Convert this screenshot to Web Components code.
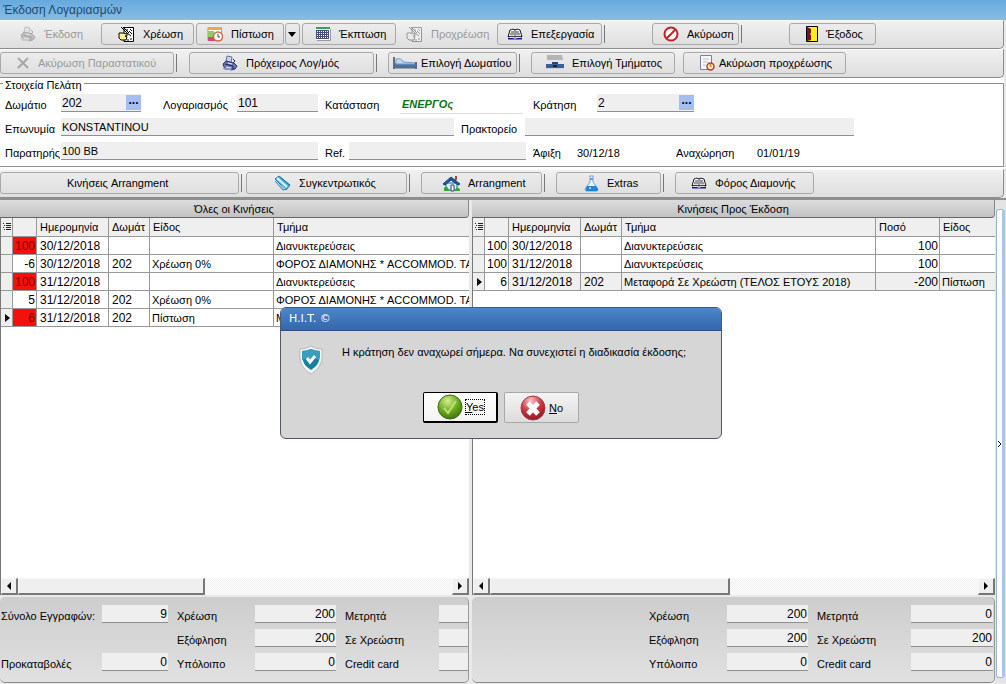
<!DOCTYPE html>
<html lang="el">
<head>
<meta charset="utf-8">
<title>Έκδοση Λογαριασμών</title>
<style>
  html, body { margin: 0; height: 100%; }
  body { font: 11px/14px "Liberation Sans", Arial, sans-serif; color: #000; background: #e9e9e9; overflow: hidden; }
</style>
</head>
<body>
<billing-window></billing-window>

<script>
const ICONS = {
  printer: [16, 16, '<path d="M5 1l5 1-1 6-5-2z" fill="#c9d2f0" stroke="#66709c"/><path d="M1 9l3-3 8 2 3 3-2 3-4 1-7-3z" fill="#6d78b0" stroke="#2c3564"/><path d="M0 13l6-1 4 3H3z" fill="#8a94c4"/><path d="M3 9l8 2v3M11 4l2 2-2 2" fill="none" stroke="#1c2454"/><path d="M4 12l5 1M6 8l4 1" stroke="#e6eaff"/>'],
  charge: [17, 17, '<path d="M6 1.500h9.500v14H6z" fill="#fff" stroke="#000"/><path d="M8 4h2M12 3l2 2M9 7l4 3M12 13h2M9 14h2M11 5l3 3" stroke="#000"/><path d="M3 1l7 7M5 1l6 6" stroke="#000"/><path d="M1 7h4l4 1v2H7l2 1-1 3H3l-2-2z" fill="#fff48a" stroke="#000"/>'],
  credit: [16, 16, '<path d="M1 1.500h13.500v13H1z" fill="#fff" stroke="#d9922b"/><path d="M1 1h14v3H1z" fill="#f0a93c"/><path d="M1 5h6v6H1z" fill="#8bcb6a"/><path d="M1 11h8v4H1z" fill="#d84a72"/><circle cx="11" cy="10.500" r="4.500" fill="#fff" stroke="#d3684a" stroke-width="1.500"/><path d="M11 8v3h2" fill="none" stroke="#446"/>'],
  sheet: [16, 16, '<path d="M1 2h14v12H1z" fill="#fff"/><path d="M1 1h14v2H1z" fill="#31a060"/><path d="M1 4.500h13M1 6.500h13M1 8.500h13M1 10.500h13M1 12.500h13M1.500 4v9M3.500 4v9M5.500 4v9M7.500 4v9M9.500 4v9M11.500 4v9M13.500 4v9" stroke="#444c78"/><path d="M2 14.500h13.500V3" fill="none" stroke="#99a"/>'],
  book: [16, 14, '<path d="M1 10l2-7c2-1 4-1 5 0 1-1 3-1 5 0l2 7c-3-1-5-1-7 0-2-1-4-1-7 0z" fill="#fff" stroke="#111"/><path d="M8 3v7M4 5h3M3 7h4M9 5h3M9 7h4" stroke="#334"/><path d="M1 11h5l2 1 2-1h5v1.500H1z" fill="#141a9c"/>'],
  forbid: [16, 16, '<circle cx="8" cy="8" r="6.500" fill="#fff" stroke="#c41e28" stroke-width="2"/><path d="M3.500 12.500l9-9" stroke="#c41e28" stroke-width="2"/>'],
  door: [12, 16, '<path d="M.5.5h11v15H.5z" fill="#ffef18" stroke="#000"/><path d="M1 1l4 2v11l-4 1z" fill="#7c1020"/><path d="M4 8h1" stroke="#fff"/>'],
  cross: [14, 14, '<path d="M2 2l10 10M12 2L2 12" stroke="#333" stroke-width="2"/>'],
  bed: [24, 14, '<path d="M1 1v12" stroke="#6b6b73" stroke-width="2"/><path d="M2 7h20v4H2z" fill="#4775ae"/><path d="M3 3c4-1 6 0 7 3l12 1v1H3z" fill="#bcd8f2" stroke="#7898c0"/><path d="M1 11.500h22M23 6v7" stroke="#596a84" stroke-width="2"/>'],
  desk: [18, 16, '<path d="M1 0h15l1 5H1z" fill="#b4b4b4"/><path d="M1 5h16v3H1z" fill="#e6e6e6"/><path d="M6 7h6v3H6z" fill="#26447a"/><path d="M0 9h18v4H0z" fill="#3a6098"/><path d="M0 13.500h18" stroke="#c8d2e4"/><path d="M7 11h4" stroke="#122" stroke-width="2"/>'],
  pagecancel: [16, 16, '<path d="M1.500.5h11v14h-11z" fill="#f5f8fb" stroke="#788292"/><path d="M4 4h6M4 7h5M4 10h3" stroke="#b6c0cc"/><circle cx="11.500" cy="11.500" r="3.500" fill="#fff4c8" stroke="#c4353a" stroke-width="1.500"/><path d="M11.500 9v3" stroke="#e58a22" stroke-width="2"/>'],
  pencils: [17, 16, '<path d="M1 4l4-3 11 9-4 5z" fill="#54b3e0" stroke="#2a6f9d"/><path d="M3 3l10 9" stroke="#d8f3ff" stroke-width="2"/><path d="M6 2l9 8" stroke="#2477ac"/><path d="M1 6l8 9 3-1" fill="#9fd4ee" stroke="#3b7da4"/>'],
  house: [17, 17, '<path d="M3 8h11v7H3z" fill="#d9ecfa" stroke="#2c67a0"/><path d="M0 9l8-7 9 7-2 1-7-5-6 5z" fill="#1a5a9e" stroke="#134274"/><path d="M12 1h2v4h-2z" fill="#9b5030"/><path d="M8 10h3v6H8z" fill="#fff" stroke="#247"/><path d="M1 13c2-3 5 0 5 3H1zM12 15c1-3 4-3 5 0v1h-5z" fill="#35a632"/>'],
  flask: [15, 17, '<path d="M5.500 1h4M6 1v6l-5 7c0 2 1 2 3 2h8c2 0 2-1 2-2L9 7V1" fill="#eaf5ff" stroke="#7ba3ce"/><path d="M3 11h9l2 3c0 2-1 2-2 2H4c-2 0-3 0-2-3z" fill="#2283dc"/><circle cx="6" cy="13" r="1" fill="#b8e5ff"/><path d="M6 3h3v2H6z" fill="#679cd2"/>'],
  shield: [26, 30, '<path d="M13 1c3 2 7 3 11 3 1 12-1 19-11 25C3 23 1 16 2 4c4 0 8-1 11-3z" fill="#f4f7f8" stroke="#b1b9bd"/><path d="M13 4c3 1 6 2 9 2 0 9-1 14-9 19C5 20 4 15 4 6c3 0 6-1 9-2z" fill="#12809f"/><path d="M13 4c3 1 6 2 9 2 0 4 0 6-1 9-5-2-11-2-17 0V6c3 0 6-1 9-2z" fill="#3a9dbd"/><path d="M9 13l3 4 5-6" fill="none" stroke="#fff" stroke-width="3"/>'],
  ok: [26, 26, '<defs><radialGradient id="g" cx=".4" cy=".25" r=".9"><stop offset="0" stop-color="#d4ee8e"/><stop offset=".5" stop-color="#6aa81e"/><stop offset="1" stop-color="#2d6206"/></radialGradient></defs><circle cx="13" cy="13" r="12" fill="url(#g)" stroke="#3c6c10"/><path d="M7 14l4 5 8-12" fill="none" stroke="#bfe070" stroke-width="2"/>'],
  no: [26, 26, '<defs><radialGradient id="r" cx=".4" cy=".2" r=".9"><stop offset="0" stop-color="#f7c6c8"/><stop offset=".5" stop-color="#cc3640"/><stop offset="1" stop-color="#86131c"/></radialGradient></defs><circle cx="13" cy="13" r="12" fill="url(#r)" stroke="#a04048"/><path d="M8 8l10 11M18 8L8 19" stroke="#fff" stroke-width="5"/>']
};

class UiElement extends HTMLElement {
  connectedCallback() {
    if (this.shadowRoot) return;
    this.attachShadow({ mode: 'open' }).innerHTML =
      `<style>*{box-sizing:border-box}${this.styles()}</style>${this.markup()}`;
  }
  attr(name, fallback = '') { return this.getAttribute(name) ?? fallback; }
}

customElements.define('ui-icon', class extends UiElement {
  styles() { return ':host{display:block;flex:none} svg{display:block}'; }
  markup() {
    const [w, h, body] = ICONS[this.attr('name')];
    return `<svg width="${w}" height="${h}" viewBox="0 0 ${w} ${h}" aria-hidden="true">${body}</svg>`;
  }
});

customElements.define('title-bar', class extends UiElement {
  styles() { return `:host{display:flex;align-items:center;flex:none;height:20px;padding-left:3px;
    background:linear-gradient(#67aade,#86bde2);color:#1d4a70;font-size:12px}
    h1{margin:0;font:inherit}`; }
  markup() { return '<h1><slot></slot></h1>'; }
});

customElements.define('tool-bar', class extends UiElement {
  styles() { return `:host{display:flex;flex:none;height:29px;margin-right:2px;padding-top:2px;align-items:flex-start;
    background:linear-gradient(#f1f1f1,#dedede);border:1px solid #8c8c8c;border-width:0 1px 1px 0;
    border-top:1px solid #fbfbfb;border-bottom-right-radius:5px}`; }
  markup() { return '<slot></slot>'; }
});

customElements.define('tool-button', class extends UiElement {
  styles() { return `:host{display:block;flex:none;width:${this.attr('width')}px;margin-left:${this.attr('gap', '2')}px}
    button{display:flex;align-items:center;gap:8px;width:100%;height:22px;padding:0 0 0 ${this.attr('pad', '0')}px;
      font:inherit;color:#000;white-space:nowrap;border:1px solid #a9a9a9;border-radius:3px;
      background:linear-gradient(#ececec,#dfdfdf)}
    :host([tight]) button{gap:4px}
    :host([flat]) button{border-color:transparent;background:none}
    :host([disabled]) button{color:#999}
    :host([disabled]) ui-icon{filter:grayscale(1);opacity:.35}
    i{border:4px solid transparent;border-top:5px solid #000;border-bottom:0}`; }
  markup() {
    const icon = this.attr('icon');
    const inner = this.hasAttribute('arrow') ? '<i></i>' : '<span><slot></slot></span>';
    return `<button type="button" ${this.hasAttribute('disabled') ? 'disabled' : ''} ${this.hasAttribute('arrow') ? 'aria-label="▼"' : ''}>
      ${icon ? `<ui-icon name="${icon}"></ui-icon>` : ''}${inner}</button>`;
  }
});

customElements.define('tool-sep', class extends UiElement {
  styles() { return ':host{display:block;flex:none;width:1px;height:18px;margin:2px 0 0 2px;background:#777}'; }
  markup() { return ''; }
});

customElements.define('form-field', class extends UiElement {
  styles() { return `:host{display:flex;flex:none}
    label{width:${this.attr('label-width')}px;padding:4px 0 0 ${this.attr('pad', '5')}px;flex:none;white-space:nowrap}
    .box{display:flex;width:${this.attr('width')}px;height:18px;background:#efefef;border-bottom:1px solid #8f8f8f}
    input{flex:1;min-width:0;width:0;padding:0 1px;border:0;background:none;font:inherit;color:#000;outline:0}
    :host([right]) input{text-align:right}
    :host([large]) input{font-size:12px}
    button{width:15px;height:15px;margin:1px 0 0;padding:0 0 5px;border:0;background:#a5bdf0;font:bold 12px/9px "Liberation Sans",sans-serif;color:#002}
    :host([plain]) .box{background:none;border-color:transparent}
    :host([plain]) input{padding-top:4px}
    :host([status]) .box{background:none;border-color:#ddd;height:20px}
    :host([status]) input{color:#0b7414;font-weight:bold;font-style:italic;padding-left:2px}`; }
  markup() {
    return `<label for="f">${this.attr('label')}</label><div class="box">
      <input id="f" value="${this.attr('value')}" readonly>
      ${this.hasAttribute('lookup') ? '<button type="button">...</button>' : ''}</div>`;
  }
});

customElements.define('client-details', class extends UiElement {
  styles() { return `:host{display:block;flex:none;margin-right:2px;background:#fff;padding:1px 0 2px}
    fieldset{margin:0;padding:7px 0 6px;border:1px solid #8f8f8f;border-left:0;min-width:0}
    legend{margin-left:3px;padding:0 2px;line-height:12px;height:8px}
    .row{display:flex;height:24px;align-items:flex-start}
    .row:last-child{height:18px}`; }
  markup() { return `<fieldset><legend>Στοιχεία Πελάτη</legend>
    <div class="row">
      <form-field large lookup label="Δωμάτιο" label-width="61" width="80" value="202"></form-field>
      <form-field large label="Λογαριασμός" label-width="96" pad="22" width="81" value="101"></form-field>
      <form-field status label="Κατάσταση" label-width="82" pad="7" width="123" value="ΕΝΕΡΓΟς"></form-field>
      <form-field large lookup label="Κράτηση" label-width="74" pad="10" width="97" value="2"></form-field>
    </div>
    <div class="row">
      <form-field label="Επωνυμία" label-width="61" width="393" value="KONSTANTINOU"></form-field>
      <form-field label="Πρακτορείο" label-width="71" pad="7" width="329"></form-field>
    </div>
    <div class="row">
      <form-field label="Παρατηρής" label-width="61" width="257" value="100 BB"></form-field>
      <form-field label="Ref." label-width="31" pad="7" width="177"></form-field>
      <form-field plain label="Άφιξη" label-width="50" pad="7" width="90" value="30/12/18"></form-field>
      <form-field plain label="Αναχώρηση" label-width="90" pad="10" width="90" value="01/01/19"></form-field>
    </div></fieldset>`; }
});

customElements.define('scroll-strip', class extends UiElement {
  styles() { return `:host{display:flex;height:17px;flex:none;background:repeating-conic-gradient(#f1f1f1 0 25%,#fdfdfd 0 50%) 0 0/2px 2px}
    button,.thumb{height:17px;flex:none;padding:0;border:1px solid #f7f7f7;border-right:2px solid #777;border-bottom:2px solid #777;background:#efefef}
    button{display:grid;place-items:center;width:17px}
    .thumb{width:${this.attr('thumb')}%} .track{flex:1}
    i{border:4px solid transparent}
    .l{border-right-color:#000;border-left:0}.r{border-left-color:#000;border-right:0}`; }
  markup() { return `<button type="button" aria-label="◂"><i class="l"></i></button><div class="thumb"></div><div class="track"></div>
    <button type="button" aria-label="▸"><i class="r"></i></button>`; }
});

const GRIDS = {
  all: {
    cols: [[24, '', 'num'], [72, 'Ημερομηνία', 'big'], [41, 'Δωμάτ', 'big'], [124, 'Είδος', ''], [0, 'Τμήμα', '']],
    rows: [
      ['100', '30/12/2018', '', '', 'Διανυκτερεύσεις'],
      ['-6', '30/12/2018', '202', 'Χρέωση 0%', 'ΦΟΡΟΣ ΔΙΑΜΟΝΗΣ * ACCOMMOD. TAX'],
      ['100', '31/12/2018', '', '', 'Διανυκτερεύσεις'],
      ['5', '31/12/2018', '202', 'Χρέωση 0%', 'ΦΟΡΟΣ ΔΙΑΜΟΝΗΣ * ACCOMMOD. TAX'],
      ['6', '31/12/2018', '202', 'Πίστωση', 'Μ']
    ],
    red: [0, 2, 4], current: 4
  },
  issue: {
    cols: [[24, '', 'num'], [72, 'Ημερομηνία', 'big'], [41, 'Δωμάτ', 'big'], [0, 'Τμήμα', ''], [64, 'Ποσό', 'num'], [55, 'Είδος', '']],
    rows: [
      ['100', '30/12/2018', '', 'Διανυκτερεύσεις', '100', ''],
      ['100', '31/12/2018', '', 'Διανυκτερεύσεις', '100', ''],
      ['6', '31/12/2018', '202', 'Μεταφορά Σε Χρεώστη (ΤΕΛΟΣ ΕΤΟΥΣ 2018)', '-200', 'Πίστωση']
    ],
    red: [], current: 2, shade: true
  }
};

customElements.define('data-grid', class extends UiElement {
  styles() { return `:host{display:block;flex:1;min-height:0;background:#fff;overflow:hidden}
    table{width:100%;table-layout:fixed;border-collapse:separate;border-spacing:0}
    td,th{height:18px;padding:0 0 0 2px;border:1px solid #999;border-width:0 1px 1px 0;font-weight:normal;text-align:left;
      white-space:nowrap;overflow:hidden;line-height:14px}
    th{height:19px;padding:0 0 0 3px;background:#efefef}
    td:last-child,th:last-child{border-right:0}
    td.num{padding:0 1px 0 0;text-align:right;font-size:12px}
    td.big{padding-left:3px;font-size:12px}
    .red{background:#f4100c;color:#7d0808}
    .mark{background:#efefef;padding:0}
    .shade td{background:#efefef} .shade td.n0{background:#fff}
    i{display:block;width:0;margin-left:4px;border:4px solid transparent;border-left:5px solid #000;border-right:0}
    svg{display:block;margin:auto}`; }
  markup() {
    const g = GRIDS[this.attr('source')];
    const col = g.cols.map(c => c[0] ? `<col style="width:${c[0]}px">` : '<col>').join('');
    const head = g.cols.map(c => `<th>${c[1]}</th>`).join('');
    const rows = g.rows.map((r, i) => `<tr class="${g.shade && i === g.current ? 'shade' : ''}">
      <td class="mark">${i === g.current ? '<i></i>' : ''}</td>` +
      r.map((t, j) => `<td class="${g.cols[j][2]} n${j} ${j === 0 && g.red.includes(i) ? 'red' : ''}">${t}</td>`).join('') + '</tr>').join('');
    return `<table><colgroup><col style="width:12px">${col}</colgroup><thead><tr>
      <th class="mark"><svg width="8" height="10" viewBox="0 0 8 10" aria-hidden="true"><path d="M0 1.500h1M3 1.500h5M1 3.500h1M3 3.500h5M0 5.500h1M3 5.500h5M1 7.500h1M3 7.500h5" stroke="#222"/></svg></th>${head}</tr></thead>
      <tbody>${rows}</tbody></table>`;
  }
});

customElements.define('totals-box', class extends UiElement {
  styles() { return `:host{display:flex;flex:none;height:86px;margin-top:2px;padding-top:8px;overflow:hidden;
      background:linear-gradient(#cdcdcd,#e1e1e1);border-bottom:1px solid #8a8a8a;border-right:1px solid #9a9a9a;border-radius:5px}
    .col{display:grid;grid-template-rows:repeat(3,18px);row-gap:6px;flex:none;align-content:start}
    .lead{width:168px}`; }
  markup() {
    const v = this.attr('values').split(',');
    const f = (label, lw, pad, w, value) => `<form-field right large label="${label}" label-width="${lw}" pad="${pad}" width="${w}" value="${value ?? ''}"></form-field>`;
    return `<div class="col lead">${this.hasAttribute('counts') ? f('Σύνολο Εγγραφών:', 102, 1, 66, '9') + '<span></span>' + f('Προκαταβολές', 102, 1, 66, '0') : ''}</div>
      <div class="col">${f('Χρέωση', 87, 9, 81, v[0])}${f('Εξόφληση', 87, 9, 81, v[1])}${f('Υπόλοιπο', 87, 9, 81, v[2])}</div>
      <div class="col">${f('Μετρητά', 103, 9, 82, v[3])}${f('Σε Χρεώστη', 103, 9, 82, v[4])}${f('Credit card', 103, 9, 82, v[5])}</div>`;
  }
});

customElements.define('list-panel', class extends UiElement {
  styles() { return `:host{display:flex;flex-direction:column;min-width:0;overflow:hidden}
    h2{flex:none;height:18px;margin:0;font:inherit;line-height:18px;text-align:center;
      background:linear-gradient(#dcdcdc,#c3c3c3);border-right:1px solid #888;border-bottom:1px solid #666;border-bottom-right-radius:4px}
    .frame{display:flex;flex-direction:column;flex:1;min-height:0;border-left:1px solid #777;background:#fff}`; }
  markup() { return `<h2>${this.attr('heading')}</h2><div class="frame"><slot></slot></div><slot name="totals"></slot>`; }
});

customElements.define('side-handle', class extends UiElement {
  styles() { return `:host{display:flex;padding:9px 1px 5px 1px;background:#e4e4e4}
    button{flex:1;padding:0;border:1px solid #9db4d6;border-right:3px solid #adc4e6;border-radius:3px;background:#fff;display:grid;place-items:center}
    svg{display:block}`; }
  markup() { return '<button type="button" aria-label="›"><svg width="5" height="8" viewBox="0 0 5 8"><path d="M1 1l3 3-3 3" fill="none" stroke="#111"/></svg></button>'; }
});

customElements.define('message-dialog', class extends UiElement {
  styles() { return `:host{display:block;position:absolute;left:280px;top:307px;width:442px}
    section{height:132px;border:1px solid #50596a;border-radius:6px;background:#d6d6d6;overflow:hidden}
    h2{margin:0;height:23px;padding-left:8px;font:11px/22px "DejaVu Sans","Liberation Sans",sans-serif;color:#fff;
      background:linear-gradient(#4c86c9,#3367ab);border-bottom:1px solid #2b4d80}
    .body{display:flex;gap:18px;padding:14px 0 0 17px}
    p{margin:0;white-space:nowrap}
    .actions{display:flex;gap:6px;margin:17px 0 0 142px}
    button{display:flex;align-items:center;gap:3px;width:75px;height:31px;padding:0 0 0 15px;font:inherit;color:#000;
      border:1px solid #a8a8a8;border-radius:2px;background:linear-gradient(#f4f4f4,#dcdcdc)}
    .default{padding-left:13px;border:1px solid #000;border-width:1px 2px 2px 1px;background:linear-gradient(#fff,#f4f4f4)}
    .default span{outline:1px dotted #000}
    u{text-decoration:underline}`; }
  markup() { return `<section role="dialog" aria-labelledby="t"><h2 id="t">H.I.T. ©</h2>
    <div class="body"><ui-icon name="shield"></ui-icon><p><slot></slot></p></div>
    <div class="actions"><button type="button" class="default"><ui-icon name="ok"></ui-icon><span><u>Y</u>es</span></button>
    <button type="button"><ui-icon name="no"></ui-icon><span><u>N</u>o</span></button></div></section>`; }
});

customElements.define('billing-window', class extends UiElement {
  styles() { return `:host{display:flex;flex-direction:column;height:100vh;position:relative;overflow:hidden}
    main{flex:1;min-height:0;display:grid;grid-template-columns:minmax(0,469fr) minmax(0,523fr) 11px;
      border-top:2px solid #8f8f8f;padding-bottom:1px}
    main{grid-template-columns:minmax(0,469fr) minmax(0,526fr) 11px}
    list-panel + list-panel{margin-left:3px}`; }
  markup() { return `<title-bar>Έκδοση Λογαριασμών</title-bar>
    <tool-bar>
      <tool-button flat disabled icon="printer" width="99" gap="0" pad="19">Έκδοση</tool-button>
      <tool-button icon="charge" width="93" pad="16">Χρέωση</tool-button>
      <tool-button icon="credit" width="88" pad="10">Πίστωση</tool-button>
      <tool-button arrow width="15" gap="1" pad="2"></tool-button>
      <tool-button icon="sheet" width="94" pad="12">Έκπτωση</tool-button>
      <tool-button flat disabled icon="charge" width="100" gap="1" pad="8">Προχρέωση</tool-button>
      <tool-button icon="book" width="105" gap="0" pad="9">Επεξεργασία</tool-button><tool-sep></tool-sep>
      <tool-button icon="forbid" width="87" gap="47" pad="10">Ακύρωση</tool-button><tool-sep></tool-sep>
      <tool-button icon="door" width="87" gap="47" pad="16">Έξοδος</tool-button>
    </tool-bar>
    <tool-bar>
      <tool-button disabled icon="cross" width="174" gap="0" pad="15">Ακύρωση Παραστατικού</tool-button><tool-sep></tool-sep>
      <tool-button icon="printer" width="185" gap="12" pad="32">Πρόχειρος Λογ/μός</tool-button><tool-sep></tool-sep>
      <tool-button tight icon="bed" width="129" gap="11" pad="4">Επιλογή Δωματίου</tool-button><tool-sep></tool-sep>
      <tool-button icon="desk" width="144" gap="11" pad="14">Επιλογή Τμήματος</tool-button>
      <tool-button tight icon="pagecancel" width="163" gap="8" pad="15">Ακύρωση προχρέωσης</tool-button>
    </tool-bar>
    <client-details></client-details>
    <tool-bar>
      <tool-button width="239" gap="0" pad="66">Κινήσεις Arrangment</tool-button><tool-sep></tool-sep>
      <tool-button icon="pencils" width="161" gap="4" pad="27">Συγκεντρωτικός</tool-button><tool-sep></tool-sep>
      <tool-button icon="house" width="121" gap="11" pad="21">Arrangment</tool-button><tool-sep></tool-sep>
      <tool-button icon="flask" width="105" gap="11" pad="27">Extras</tool-button><tool-sep></tool-sep>
      <tool-button icon="book" width="139" gap="11" pad="15">Φόρος Διαμονής</tool-button>
    </tool-bar>
    <main>
      <list-panel heading="Όλες οι Κινήσεις"><data-grid source="all"></data-grid><scroll-strip thumb="40"></scroll-strip>
        <totals-box slot="totals" counts values="200,200,0,,,"></totals-box></list-panel>
      <list-panel heading="Κινήσεις Προς Έκδοση"><data-grid source="issue"></data-grid><scroll-strip thumb="46"></scroll-strip>
        <totals-box slot="totals" values="200,200,0,0,200,0"></totals-box></list-panel>
      <side-handle></side-handle>
    </main>
    <message-dialog>Η κράτηση δεν αναχωρεί σήμερα. Να συνεχιστεί η διαδικασία έκδοσης;</message-dialog>`; }
});
</script>
</body>
</html>
